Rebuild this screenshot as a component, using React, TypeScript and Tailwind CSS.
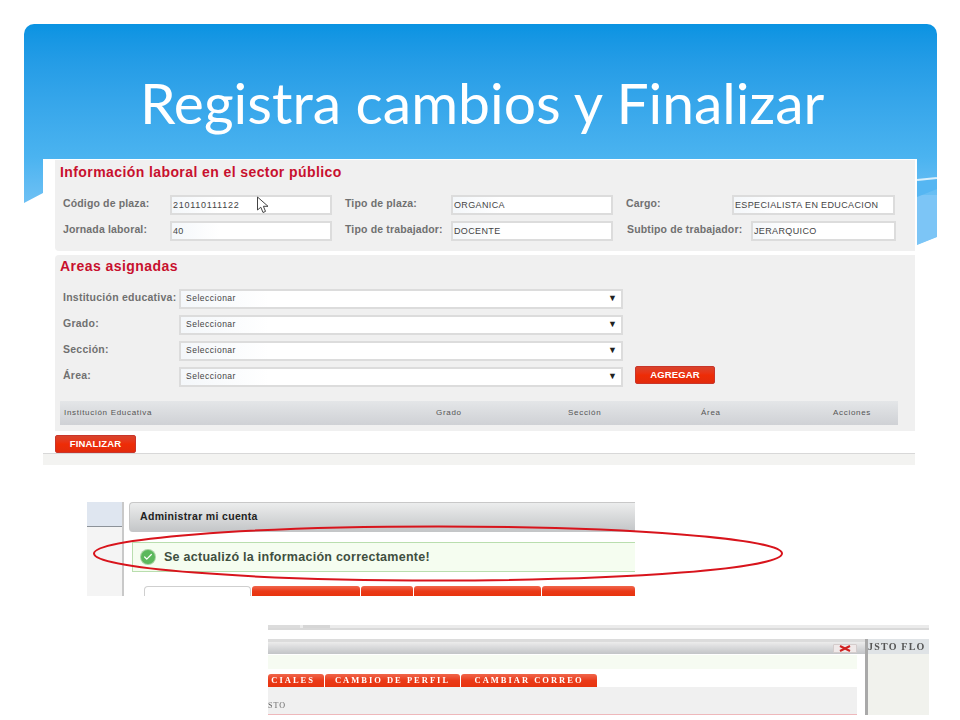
import { Check } from "lucide-react";

const sans = "font-['Liberation_Sans',Arial,sans-serif]";

function Field({ label, value, labelClass, inputClass, ml, valueClass }: { label: string; value: string; labelClass: string; inputClass: string; ml?: string; valueClass?: string }) {
  return (
    <div className={`flex items-start ${ml ?? ""}`}>
      <span className={`${labelClass} shrink-0 text-[10.5px] font-bold tracking-[0.15px] leading-[16px] text-[#707070]`}>{label}</span>
      <div className={`${inputClass} ${valueClass ?? "tracking-[0.36px]"} h-[20px] shrink-0 border-2 border-[#dcdcdc] bg-linear-to-r from-[#f4f7fa] to-white to-30% pl-px text-[9px] leading-[17px] text-[#444]`}>
        {value}
      </div>
    </div>
  );
}

function SelectRow({ label, children }: { label: string; children?: React.ReactNode }) {
  return (
    <div className="flex h-[20px] items-start">
      <span className="w-[116px] shrink-0 text-[10.5px] font-bold leading-[17px] tracking-[0.25px] text-[#707070]">{label}</span>
      <div className="flex h-[20px] w-[444px] shrink-0 items-center justify-between border-2 border-[#dcdcdc] bg-linear-to-r from-[#f4f7fa] to-white to-20% pb-px pl-[5px] pr-[4px]">
        <span className="text-[8.5px] tracking-[0.5px] text-[#444]">Seleccionar</span>
        <span className="text-[9px] leading-none text-[#222]">▼</span>
      </div>
      {children}
    </div>
  );
}

function RedButton({ label, className }: { label: string; className: string }) {
  return (
    <div className={`${className} flex h-[18px] items-center justify-center rounded-[2px] border border-[#c9352a] bg-linear-to-b from-[#d8432b] via-[#ee2c06] to-[#e22b0c] text-[9.5px] font-bold tracking-[0.15px] text-white`}>
      {label}
    </div>
  );
}

function RedTab({ label, className }: { label?: string; className: string }) {
  return (
    <div className={`${className} flex h-full shrink-0 items-center justify-center overflow-hidden whitespace-nowrap rounded-t-[3px] bg-linear-to-b from-[#f0654a] via-[#ea3a18] to-[#e8330d] font-['Liberation_Serif',serif] text-[8.5px] font-bold tracking-[2px] text-white`}>
      {label}
    </div>
  );
}

export default function App() {
  return (
    <div className={`relative h-[720px] w-[960px] overflow-hidden bg-white ${sans}`}>
      {/* slide header */}
      <div className="absolute left-[24px] top-[24px] h-[221px] w-[913px] rounded-t-[10px] bg-linear-to-b from-[#0993e2] via-[#4ab3f0] via-60% to-[#8acdf8] [clip-path:polygon(0_0,100%_0,100%_213px,893px_221px,893px_169px,19px_169px,0_179px)]">
        <div className="absolute left-[893px] top-[171px] h-[50px] w-[20px] bg-[#7cc5f6] [clip-path:polygon(0_0,100%_-8%,100%_84%,0_100%)]" />
        <div className="absolute left-[893px] top-[153px] h-[20px] w-[20px] bg-[#55b6f2] [clip-path:polygon(0_4px,100%_2px,100%_12px,0_20px)]" />
        <div className="absolute left-[893px] top-[154px] h-[2px] w-[20px] -rotate-6 bg-[#d8effc]" />
      </div>

      <h1 className="absolute left-[140px] top-[64px] whitespace-nowrap font-['Lato',sans-serif] text-[57px] font-normal leading-[76px] text-white">
        Registra cambios y Finalizar
      </h1>

      {/* form screenshot */}
      <div className="absolute left-[43px] top-[159px] flex h-[306px] w-[874px] flex-col bg-white">
        <div className="ml-[12px] mt-px flex h-[91px] w-[860px] flex-col rounded-bl-[4px] bg-[#f0f0f0] pl-[5px]">
          <h2 className="mt-[5px] h-[15px] text-[14px] font-bold leading-[15px] tracking-[0.41px] text-[#c8102e]">
            Información laboral en el sector público
          </h2>
          <div className="mt-[15px] flex pl-[3px]">
            <Field label="Código de plaza:" value="210110111122" labelClass="w-[107px]" inputClass="w-[162px]" valueClass="tracking-[0.75px]" />
            <Field label="Tipo de plaza:" value="ORGANICA" labelClass="w-[106px]" inputClass="w-[162px]" ml="ml-[13px]" />
            <Field label="Cargo:" value="ESPECIALISTA EN EDUCACION" labelClass="w-[106px]" inputClass="w-[163px]" ml="ml-[13px]" />
          </div>
          <div className="mt-[6px] flex pl-[3px]">
            <Field label="Jornada laboral:" value="40" labelClass="w-[107px]" inputClass="w-[162px]" />
            <Field label="Tipo de trabajador:" value="DOCENTE" labelClass="w-[106px]" inputClass="w-[162px]" ml="ml-[13px]" />
            <Field label="Subtipo de trabajador:" value="JERARQUICO" labelClass="w-[124px]" inputClass="w-[145px]" ml="ml-[14px]" />
          </div>
        </div>

        <div className="ml-[12px] mt-[4px] flex h-[176px] w-[860px] flex-col rounded-tl-[4px] bg-[#f0f0f0] pl-[5px]">
          <h2 className="mt-[4px] h-[15px] text-[14px] font-bold leading-[15px] tracking-[0.45px] text-[#c8102e]">Areas asignadas</h2>
          <div className="mt-[15px] flex flex-col gap-[6px] pl-[3px]">
            <SelectRow label="Institución educativa:" />
            <SelectRow label="Grado:" />
            <SelectRow label="Sección:" />
            <SelectRow label="Área:">
              <RedButton label="AGREGAR" className="-mt-px ml-[12px] w-[80px]" />
            </SelectRow>
          </div>
          <div className="mt-[14px] flex h-[24px] w-[838px] items-center bg-linear-to-b from-[#e4e6e8] to-[#cfd1d5] pb-px text-[8px] tracking-[0.7px] text-[#555]">
            <span className="ml-[4px] w-[372px]">Institución Educativa</span>
            <span className="w-[132px]">Grado</span>
            <span className="w-[133px]">Sección</span>
            <span className="w-[132px]">Área</span>
            <span>Acciones</span>
          </div>
        </div>

        <div className="flex h-[22px] items-end pl-[12px]">
          <RedButton label="FINALIZAR" className="w-[81px]" />
        </div>
        <div className="h-[12px] w-[872px] border-t border-[#d8d8d8] bg-[#f3f3f1]" />
      </div>

      {/* saved message screenshot */}
      <div className="absolute left-[87px] top-[502px] flex h-[94px] w-[548px] overflow-hidden bg-white">
        <div className="flex w-[37px] shrink-0 flex-col border-r-2 border-[#c9c9c9]">
          <div className="h-[25px] border-b border-[#8c9299] bg-[#dfe6f0]" />
          <div className="flex-1 bg-[#f4f4f4]" />
        </div>
        <div className="ml-[5px] flex min-w-0 flex-1 flex-col">
          <div className="flex h-[30px] shrink-0 items-center rounded-l-[4px] border-t border-l border-[#c8c8c8] bg-linear-to-b from-[#eceded] to-[#c3c5c7] pb-[2px] pl-[10px] text-[10.5px] font-bold tracking-[0.33px] text-[#222]">
            Administrar mi cuenta
          </div>
          <div className="ml-[3px] mt-[10px] flex h-[30px] shrink-0 items-center border-y border-l border-[#b9deae] bg-[#f5fdf0] pl-[8px]">
            <span className="flex h-[14px] w-[14px] items-center justify-center rounded-full bg-[#5cb85c] ring-1 ring-[#a9d3a3]">
              <Check className="h-[10px] w-[10px] text-white" strokeWidth={3} />
            </span>
            <span className="ml-[9px] text-[12.5px] font-bold tracking-[0.26px] text-[#3f4f3f]">Se actualizó la información correctamente!</span>
          </div>
          <div className="ml-[15px] mt-[14px] flex h-[10px] gap-px">
            <div className="h-full w-[107px] shrink-0 rounded-t-[4px] border-t border-x border-[#cfcfcf] bg-white" />
            <RedTab className="w-[108px]" />
            <RedTab className="w-[52px]" />
            <RedTab className="w-[127px]" />
            <RedTab className="w-[93px]" />
          </div>
        </div>
      </div>

      {/* red ellipse over the message */}
      <svg className="absolute left-[90px] top-[522px]" width="696" height="63" viewBox="0 0 696 63" fill="none">
        <ellipse cx="348" cy="31.5" rx="344" ry="27" stroke="#d8141c" strokeWidth="2" />
      </svg>

      {/* cursor */}
      <svg className="absolute left-[256px] top-[196px]" width="15" height="18" viewBox="0 0 15 18">
        <path d="M1.5 1 V14 L4.8 11.2 L7 16.5 L9.5 15.4 L7.4 10.3 H12 Z" fill="#fff" stroke="#444" strokeWidth="1" />
      </svg>

      {/* modal screenshot */}
      <div className="absolute left-[268px] top-[625px] flex h-[90px] w-[661px] flex-col overflow-hidden bg-white blur-[0.4px]">
        <div className="flex h-[5px] shrink-0 gap-[3px] border-b-2 border-[#d9d9d9] bg-[#ebebeb]">
          <div className="w-[32px] bg-[#dcdcdc]" />
          <div className="w-[27px] bg-[#d6d6d6]" />
        </div>
        <div className="mt-[9px] flex min-h-0 flex-1">
          <div className="flex w-[597px] shrink-0 flex-col">
            <div className="flex h-[15px] shrink-0 items-center justify-end border-t-[3px] border-[#dcdcdc] bg-linear-to-b from-[#ececec] to-[#c2c4c7] pr-[8px]">
              <div className="flex h-[9px] w-[24px] items-center justify-center rounded-[1px] border border-[#d4cccc] bg-[#efe9e9]">
                <svg width="14" height="7" viewBox="0 0 14 7">
                  <path d="M2 1 L12 6 M12 1 L2 6" stroke="#d02020" strokeWidth="2" />
                </svg>
              </div>
            </div>
            <div className="mt-px h-[14px] w-[589px] shrink-0 bg-[#f6fbf2]" />
            <div className="mt-[5px] flex h-[13px] shrink-0 gap-px">
              <RedTab label="CIALES" className="w-[56px] justify-end pr-[9px]" />
              <RedTab label="CAMBIO DE PERFIL" className="w-[135px]" />
              <RedTab label="CAMBIAR CORREO" className="w-[136px]" />
            </div>
            <div className="h-[28px] w-[589px] shrink-0 border-b border-[#eeb8bb] bg-[#f0f0f0] pt-[14px] font-['Liberation_Serif',serif] text-[8px] leading-[10px] tracking-[1px] text-[#666]">
              STO
            </div>
          </div>
          <div className="flex min-w-0 flex-1 flex-col border-l-[3px] border-[#a9a9a9]">
            <div className="flex h-[15px] shrink-0 items-center whitespace-nowrap bg-[#dfe3e6] font-['Liberation_Serif',serif] text-[10px] font-bold tracking-[1.2px] text-[#555]">JSTO FLO</div>
            <div className="flex-1 bg-[#f1f2ed]" />
          </div>
        </div>
      </div>
    </div>
  );
}
